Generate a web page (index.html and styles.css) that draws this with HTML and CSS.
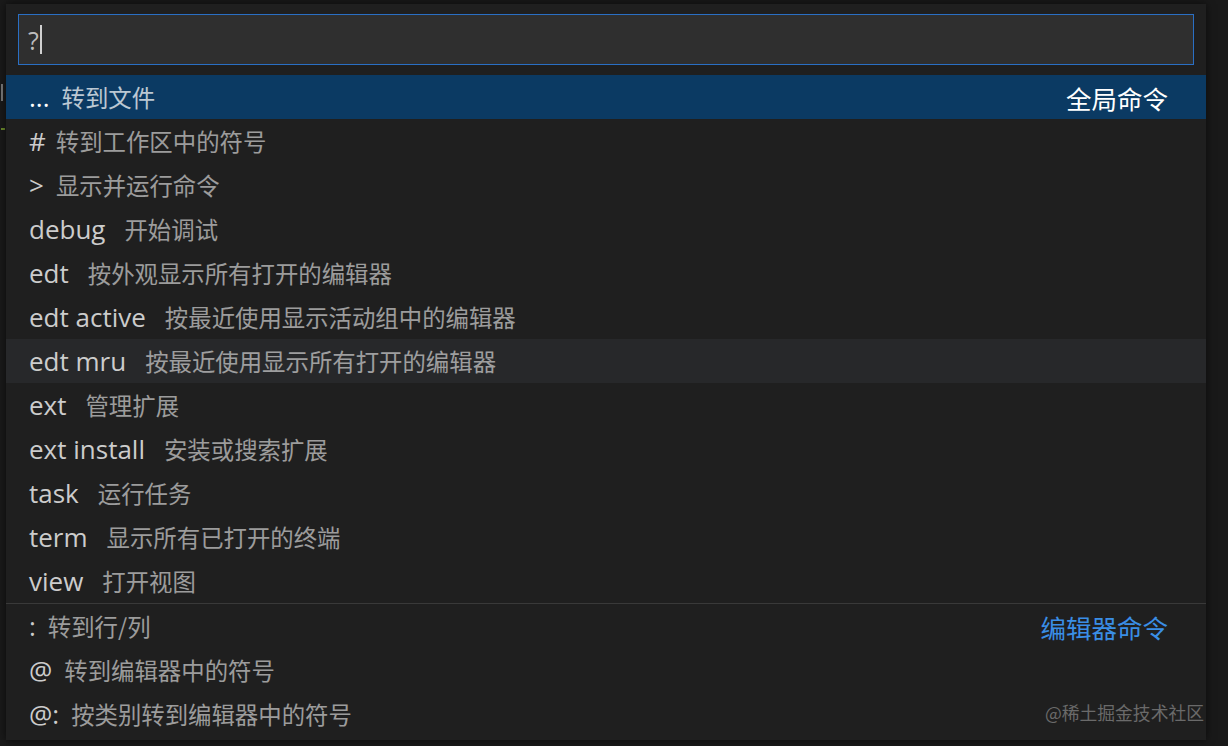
FILE: index.html
```html
<!DOCTYPE html>
<html lang="zh-CN">
<head>
<meta charset="utf-8">
<title>Quick Open</title>
<link rel="stylesheet" href="styles.css">
</head>
<body>
<div class="stage">
  <div class="gutter">
    <span class="mark mark-a"></span>
    <span class="mark mark-b"></span>
  </div>
  <div class="widget">
    <div class="input-wrap">
      <div class="input"><span class="query">?</span><span class="caret"></span></div>
    </div>
    <ul class="list">
      <li class="row selected"><span class="label sym">...</span><span class="desc">转到文件</span><span class="kw">全局命令</span></li>
      <li class="row"><span class="label sym">#</span><span class="desc tight">转到工作区中的符号</span></li>
      <li class="row"><span class="label sym">&gt;</span><span class="desc">显示并运行命令</span></li>
      <li class="row"><span class="label">debug</span><span class="desc">开始调试</span></li>
      <li class="row"><span class="label">edt</span><span class="desc">按外观显示所有打开的编辑器</span></li>
      <li class="row"><span class="label">edt active</span><span class="desc">按最近使用显示活动组中的编辑器</span></li>
      <li class="row hover"><span class="label">edt mru</span><span class="desc">按最近使用显示所有打开的编辑器</span></li>
      <li class="row"><span class="label">ext</span><span class="desc">管理扩展</span></li>
      <li class="row"><span class="label">ext install</span><span class="desc">安装或搜索扩展</span></li>
      <li class="row"><span class="label">task</span><span class="desc">运行任务</span></li>
      <li class="row"><span class="label">term</span><span class="desc">显示所有已打开的终端</span></li>
      <li class="row"><span class="label">view</span><span class="desc">打开视图</span></li>
      <li class="row separated"><span class="label sym">:</span><span class="desc">转到行/列</span><span class="kw group">编辑器命令</span></li>
      <li class="row"><span class="label sym">@</span><span class="desc">转到编辑器中的符号</span></li>
      <li class="row"><span class="label sym">@:</span><span class="desc">按类别转到编辑器中的符号</span></li>
    </ul>
    <div class="watermark">@稀土掘金技术社区</div>
  </div>
</div>
</body>
</html>
```

FILE: styles.css
```css
html, body {
  margin: 0;
  padding: 0;
  background: #191919;
  width: 1228px;
  height: 746px;
  overflow: hidden;
}

.stage {
  display: flex;
  height: 746px;
  font-family: "Open Sans", "Noto Sans CJK SC", sans-serif;
}

.gutter {
  position: relative;
  width: 6px;
  flex: none;
  background: #1a1a1a;
}

.mark {
  position: absolute;
  left: 1px;
  width: 2px;
}

.mark-a {
  top: 84px;
  height: 17px;
  background: #7a7a7a;
}

.mark-b {
  top: 128px;
  height: 2px;
  width: 4px;
  background: #6b8a2c;
}

.widget {
  position: relative;
  width: 1200px;
  height: 736px;
  margin-top: 4px;
  background: #1f1f1f;
  box-shadow: 0 0 8px rgba(0, 0, 0, 0.6);
  display: flex;
  flex-direction: column;
}

.input-wrap {
  padding: 10px 12px 10px 12px;
}

.input {
  height: 49px;
  border: 1px solid #2a6fc4;
  background: #2f2f2f;
  display: flex;
  align-items: center;
  padding-left: 9px;
}

.query {
  color: #bdbdbd;
  font-size: 25px;
  font-family: "Open Sans", sans-serif;
}

.caret {
  display: inline-block;
  width: 2px;
  height: 29px;
  margin-left: 1px;
  background: #d0d0d0;
}

.list {
  list-style: none;
  margin: 0;
  padding: 0;
}

.row {
  height: 44px;
  display: flex;
  align-items: center;
  padding: 0 38px 0 23px;
  color: #cccccc;
  font-size: 26px;
  white-space: nowrap;
}

.row.selected {
  background: #0b3a63;
  color: #ffffff;
}

.row.hover {
  background: #27282a;
}

.row.separated {
  border-top: 1px solid #393939;
}

.label {
  font-family: "Open Sans", "Noto Sans CJK SC", sans-serif;
  line-height: 44px;
}

.desc {
  font-family: "Noto Sans CJK SC", sans-serif;
  font-size: 23.4px;
  opacity: 0.72;
  margin-left: 19px;
  line-height: 44px;
}

.label.sym + .desc {
  margin-left: 12px;
}

.label.sym + .desc.tight {
  margin-left: 10px;
}

.kw {
  margin-left: auto;
  font-family: "Noto Sans CJK SC", sans-serif;
  font-size: 25.5px;
  font-weight: 400;
  color: #ffffff;
}

.kw.group {
  color: #3a8ee6;
}

.watermark {
  position: absolute;
  right: 2px;
  bottom: 15px;
  font-family: "Noto Sans CJK SC", sans-serif;
  font-size: 17.8px;
  color: #6a6a6a;
}
```
